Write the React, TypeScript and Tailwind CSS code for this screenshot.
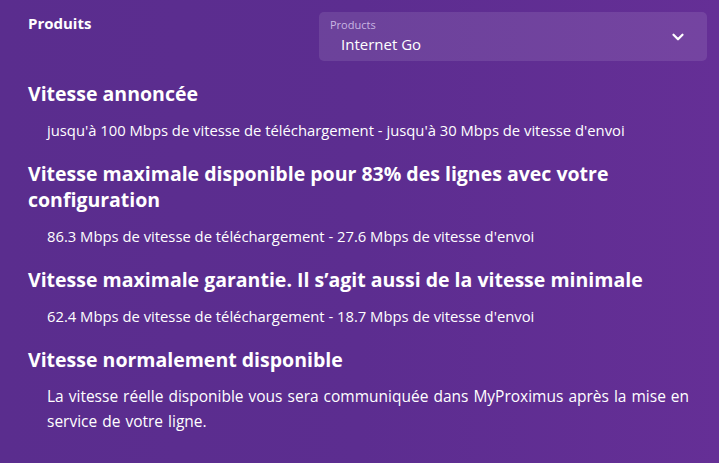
import { ChevronDown } from 'lucide-react';

const sections = [
  {
    title: 'Vitesse annoncée',
    body: "jusqu'à 100 Mbps de vitesse de téléchargement - jusqu'à 30 Mbps de vitesse d'envoi",
  },
  {
    title: 'Vitesse maximale disponible pour 83% des lignes avec votre configuration',
    body: "86.3 Mbps de vitesse de téléchargement - 27.6 Mbps de vitesse d'envoi",
  },
  {
    title: 'Vitesse maximale garantie. Il s’agit aussi de la vitesse minimale',
    body: "62.4 Mbps de vitesse de téléchargement - 18.7 Mbps de vitesse d'envoi",
  },
  {
    title: 'Vitesse normalement disponible',
    body: 'La vitesse réelle disponible vous sera communiquée dans MyProximus après la mise en service de votre ligne.',
    wide: true,
  },
];

export default function App() {
  return (
    <div
      className="w-[719px] h-[463px] overflow-hidden bg-gradient-to-r from-[#5a2d8e] via-[#5c2d90] to-[#652f96] text-white px-7 pt-3"
      style={{ fontFamily: '"Open Sans", Lato, sans-serif' }}
    >
      {/* Header row */}
      <div className="flex items-start justify-between">
        <h1 className="pt-[1px] text-[15px] font-bold leading-5">Produits</h1>
        <div className="w-[388px] h-[49px] -mr-[16px] rounded-[5px] bg-white/10 flex items-center justify-between pl-[11px] pr-[20px]">
          <div className="flex flex-col -mt-[2px]">
            <span className="text-[11px] leading-4 text-[#c9b6e2]">Products</span>
            <span className="text-[15px] leading-5 pl-[11px] mt-[1px]">Internet Go</span>
          </div>
          <ChevronDown className="w-[18px] h-[18px]" strokeWidth={3} />
        </div>
      </div>

      {/* Speed sections */}
      <div className="mt-[20px] flex flex-col gap-[18px]">
        {sections.map((s) => (
          <div key={s.title}>
            <h2 className="text-[19.5px] font-bold leading-[26px] pr-[40px]">{s.title}</h2>
            <p
              className={
                s.wide
                  ? 'mt-[11px] pl-[19px] -mr-[4px] text-[15.5px] leading-[25px] [word-spacing:1px]'
                  : 'mt-[11px] pl-[19px] pr-[10px] text-[14.8px] leading-[25px]'
              }
            >
              {s.body}
            </p>
          </div>
        ))}
      </div>
    </div>
  );
}
